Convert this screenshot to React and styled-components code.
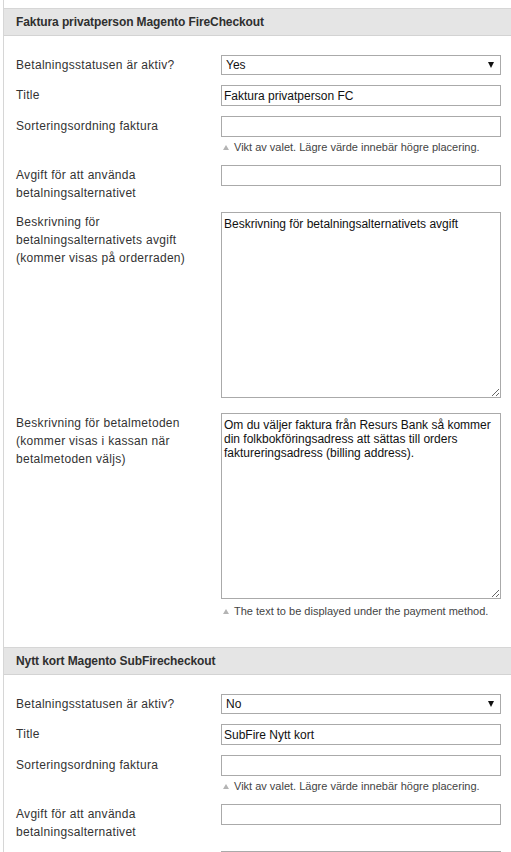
import React from "react";
import styled, { createGlobalStyle } from "styled-components";

const GlobalStyle = createGlobalStyle`
  body {
    margin: 0;
    background: #ffffff;
    font-family: "Liberation Sans", Arial, sans-serif;
    font-size: 12px;
    color: #333333;
  }
`;

const sections = [
  {
    title: "Faktura privatperson Magento FireCheckout",
    active: "Yes",
    name: "Faktura privatperson FC",
    fee: "Beskrivning för betalningsalternativets avgift",
    description:
      "Om du väljer faktura från Resurs Bank så kommer din folkbokföringsadress att sättas till orders faktureringsadress (billing address).",
  },
  {
    title: "Nytt kort Magento SubFirecheckout",
    active: "No",
    name: "SubFire Nytt kort",
    fee: "",
    description: "",
  },
];

function PaymentSection({ section }) {
  return (
    <Section>
      <SectionHead>{section.title}</SectionHead>
      <SectionBody>
        <Row>
          <Label>Betalningsstatusen är aktiv?</Label>
          <Value>
            <SelectBox>
              <Select defaultValue={section.active}>
                <option>Yes</option>
                <option>No</option>
              </Select>
            </SelectBox>
          </Value>
        </Row>
        <Row>
          <Label>Title</Label>
          <Value>
            <TextInput defaultValue={section.name} />
          </Value>
        </Row>
        <Row>
          <Label>Sorteringsordning faktura</Label>
          <Value>
            <TextInput defaultValue="" />
            <Hint>Vikt av valet. Lägre värde innebär högre placering.</Hint>
          </Value>
        </Row>
        <Row>
          <Label>Avgift för att använda betalningsalternativet</Label>
          <Value>
            <TextInput defaultValue="" />
          </Value>
        </Row>
        <Row>
          <Label>
            Beskrivning för betalningsalternativets avgift (kommer visas på
            orderraden)
          </Label>
          <Value>
            <Textarea defaultValue={section.fee} />
          </Value>
        </Row>
        <Row>
          <Label>
            Beskrivning för betalmetoden (kommer visas i kassan när
            betalmetoden väljs)
          </Label>
          <Value>
            <Textarea defaultValue={section.description} />
            <Hint>The text to be displayed under the payment method.</Hint>
          </Value>
        </Row>
      </SectionBody>
    </Section>
  );
}

export default function App() {
  return (
    <>
      <GlobalStyle />
      <Page>
        {sections.map((s) => (
          <PaymentSection key={s.title} section={s} />
        ))}
      </Page>
    </>
  );
}

const Page = styled.div`
  margin-left: 3px;
  padding-top: 8px;
  min-height: 100vh;
  box-sizing: border-box;
  border-left: 1px solid #d6d6d6;
`;

const Section = styled.div`
  margin-bottom: 8px;
`;

const SectionHead = styled.div`
  height: 28px;
  box-sizing: border-box;
  padding: 0 12px;
  line-height: 26px;
  background: #e5e5e5;
  border-top: 1px solid #d6d6d6;
  border-bottom: 1px solid #d3d3d3;
  font-weight: bold;
  letter-spacing: -0.1px;
  color: #2f2f2f;
`;

const SectionBody = styled.div`
  padding: 14px 0 15px 12px;
`;

const Row = styled.div`
  display: grid;
  grid-template-columns: 205px 280px;
  padding: 5px 0;
`;

const Label = styled.div`
  padding: 1px 10px 0 0;
  line-height: 18px;
  letter-spacing: 0.3px;
  color: #333333;
`;

const Value = styled.div`
  display: flex;
  flex-direction: column;
`;

const SelectBox = styled.div`
  position: relative;
  width: 280px;
  height: 20px;

  &::after {
    content: "";
    position: absolute;
    right: 7px;
    top: 7px;
    width: 0;
    height: 0;
    border-left: 3.5px solid transparent;
    border-right: 3.5px solid transparent;
    border-top: 6px solid #111111;
    pointer-events: none;
  }
`;

const Select = styled.select`
  appearance: none;
  display: block;
  width: 100%;
  height: 20px;
  box-sizing: border-box;
  margin: 0;
  padding: 0 0 0 4px;
  border: 1px solid #aaaaaa;
  border-radius: 0;
  background: #ffffff;
  font-family: "Liberation Sans", Arial, sans-serif;
  font-size: 12px;
  color: #111111;
  outline: none;
`;

const TextInput = styled.input`
  display: block;
  width: 280px;
  height: 21px;
  box-sizing: border-box;
  margin: 0;
  padding: 0 2px;
  border: 1px solid #aaaaaa;
  border-radius: 0;
  font-family: "Liberation Sans", Arial, sans-serif;
  font-size: 12px;
  color: #111111;
  outline: none;
`;

const Textarea = styled.textarea`
  display: block;
  width: 280px;
  height: 186px;
  box-sizing: border-box;
  margin: 0 0 5px;
  padding: 4px 1px 2px 2px;
  border: 1px solid #aaaaaa;
  border-radius: 0;
  font-family: "Liberation Sans", Arial, sans-serif;
  font-size: 12px;
  line-height: 14px;
  color: #111111;
  outline: none;
`;

const Hint = styled.div`
  margin-top: 3px;
  padding-left: 2px;
  font-size: 11px;
  line-height: 15px;
  color: #444444;

  textarea + & {
    margin-top: 0;
  }

  &::before {
    content: "";
    display: inline-block;
    width: 0;
    height: 0;
    margin-right: 5px;
    vertical-align: 1px;
    border-left: 3px solid transparent;
    border-right: 3px solid transparent;
    border-bottom: 5px solid #b4b4b4;
  }
`;
